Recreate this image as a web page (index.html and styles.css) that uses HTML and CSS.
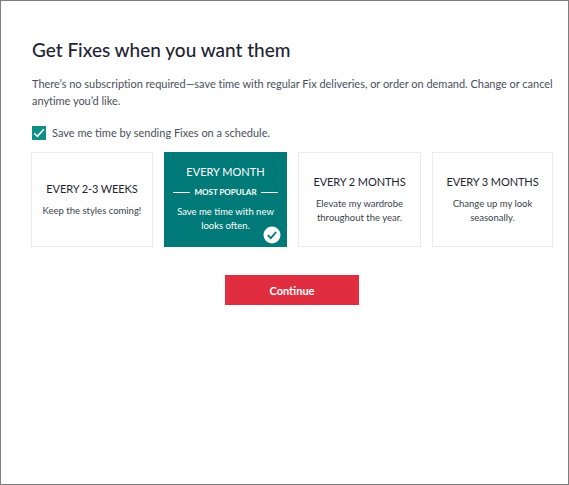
FILE: index.html
```html
<!DOCTYPE html>
<html lang="en">
<head>
<meta charset="utf-8">
<title>Get Fixes</title>
<link rel="stylesheet" href="styles.css">
</head>
<body>
<main class="frame">
  <h1 class="title">Get Fixes when you want them</h1>
  <p class="intro">There’s no subscription required—save time with regular Fix deliveries, or order on demand. Change or cancel anytime you’d like.</p>
  <label class="opt">
    <span class="box"><svg width="12" height="10" viewBox="0 0 12 10"><path d="M1.2 5.2 4.4 8.4 10.8 1.2" fill="none" stroke="#fff" stroke-width="1.6"/></svg></span>
    <span>Save me time by sending Fixes on a schedule.</span>
  </label>
  <div class="cards">
    <div class="card">
      <div class="name">EVERY 2-3 WEEKS</div>
      <div class="desc">Keep the styles coming!</div>
    </div>
    <div class="card selected">
      <div class="name">EVERY MONTH</div>
      <div class="popular"><span class="rule"></span><span>MOST POPULAR</span><span class="rule"></span></div>
      <div class="desc">Save me time with new looks often.</div>
      <span class="tick"><svg width="18" height="18" viewBox="0 0 18 18"><circle cx="9" cy="9" r="8.5" fill="#fff"/><path d="M4.8 9.2 7.8 12.2 13.2 6" fill="none" stroke="#007a78" stroke-width="1.8"/></svg></span>
    </div>
    <div class="card">
      <div class="name">EVERY 2 MONTHS</div>
      <div class="desc">Elevate my wardrobe throughout the year.</div>
    </div>
    <div class="card">
      <div class="name">EVERY 3 MONTHS</div>
      <div class="desc">Change up my look seasonally.</div>
    </div>
  </div>
  <div class="actions"><button class="cta" type="button">Continue</button></div>
</main>
</body>
</html>
```
FILE: styles.css
```css
html, body { margin: 0; padding: 0; background: #fff; }
.frame {
  box-sizing: border-box;
  width: 569px;
  height: 485px;
  border: 1px solid #7f7f7f;
  padding: 36px 15px 0 30px;
  font-family: Lato, "Open Sans", sans-serif;
  color: #2b3040;
}
.title {
  margin: 0;
  padding-left: 1px;
  font-size: 19px;
  line-height: 26px;
  font-weight: 500;
  color: #1f2433;
}
.intro {
  margin: 12px 0 0;
  padding-left: 1px;
  font-size: 11px;
  line-height: 17px;
  letter-spacing: -0.025px;
  color: #4a4f5c;
}
.opt {
  display: flex;
  align-items: center;
  gap: 6px;
  margin-top: 17px;
  padding-left: 1px;
  font-size: 11px;
  line-height: 14px;
  color: #4a4f5c;
}
.box {
  display: flex;
  align-items: center;
  justify-content: center;
  width: 14px;
  height: 14px;
  background: #0f8f88;
}
.cards {
  display: grid;
  grid-template-columns: 122px 123px 123px 121px;
  column-gap: 11px;
  margin-top: 12px;
}
.card {
  position: relative;
  box-sizing: border-box;
  height: 95px;
  border: 1px solid #ebebeb;
  display: flex;
  flex-direction: column;
  align-items: center;
  justify-content: center;
  text-align: center;
  padding: 0 8px;
}
.name {
  font-size: 11px;
  line-height: 14px;
  letter-spacing: -0.1px;
  color: #1f2433;
}
.desc {
  margin-top: 8px;
  font-size: 9.5px;
  line-height: 14px;
  color: #3a3f4c;
}
.card.selected {
  background: #007a78;
  border-color: #007a78;
  color: #fff;
  padding-bottom: 1px;
}
.selected .name { color: #fff; letter-spacing: 0; }
.selected .desc { color: #fff; margin-top: 8px; }
.popular {
  display: flex;
  align-items: center;
  gap: 4px;
  align-self: stretch;
  margin-top: 8px;
  font-size: 8px;
  line-height: 10px;
  font-weight: 700;
  white-space: nowrap;
}
.rule { flex: 1; height: 1px; background: #fff; }
.tick { position: absolute; right: 5px; bottom: 2px; display: flex; }
.actions {
  display: flex;
  justify-content: center;
  margin-top: 28px;
}
.cta {
  width: 134px;
  height: 30px;
  border: 0;
  padding: 0;
  background: #e02e40;
  color: #fff;
  font-family: inherit;
  font-size: 11px;
  font-weight: 700;
}
```
